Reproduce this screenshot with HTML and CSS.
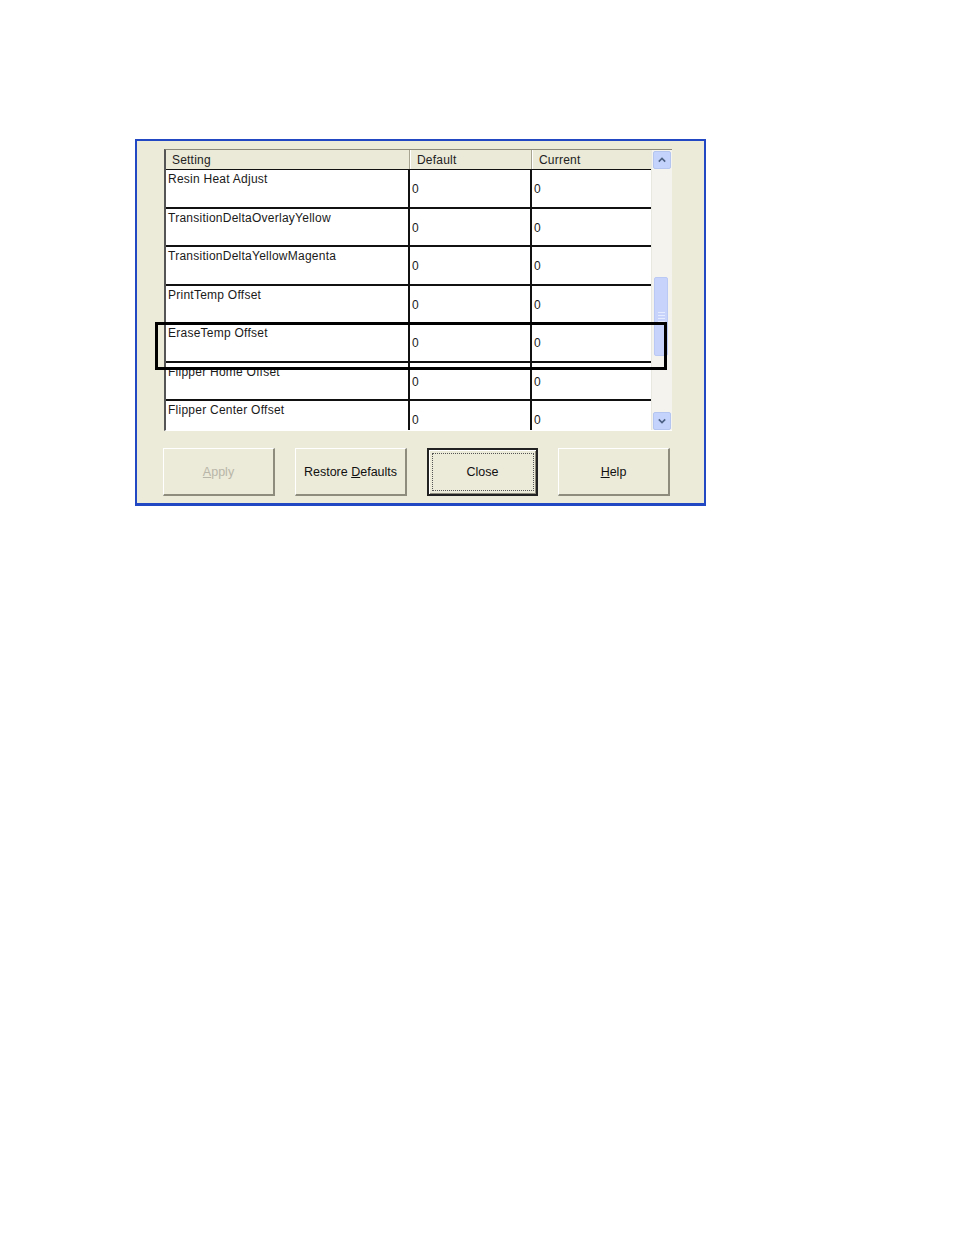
FILE: index.html
```html
<!DOCTYPE html>
<html>
<head>
<meta charset="utf-8">
<link rel="stylesheet" href="styles.css">
</head>
<body>
<div class="page">
  <div class="dialog">
    <div class="grid">
      <div class="table">
        <div class="head">
          <div class="hc c1">Setting</div>
          <div class="hc c2">Default</div>
          <div class="hc c3">Current</div>
        </div>
        <div class="row"><div class="cell c1">Resin Heat Adjust</div><div class="cell c2 v">0</div><div class="cell c3 v">0</div></div>
        <div class="row"><div class="cell c1">TransitionDeltaOverlayYellow</div><div class="cell c2 v">0</div><div class="cell c3 v">0</div></div>
        <div class="row"><div class="cell c1">TransitionDeltaYellowMagenta</div><div class="cell c2 v">0</div><div class="cell c3 v">0</div></div>
        <div class="row"><div class="cell c1">PrintTemp Offset</div><div class="cell c2 v">0</div><div class="cell c3 v">0</div></div>
        <div class="row"><div class="cell c1">EraseTemp Offset</div><div class="cell c2 v">0</div><div class="cell c3 v">0</div></div>
        <div class="row"><div class="cell c1">Flipper Home Offset</div><div class="cell c2 v">0</div><div class="cell c3 v">0</div></div>
        <div class="row last"><div class="cell c1">Flipper Center Offset</div><div class="cell c2 v">0</div><div class="cell c3 v">0</div></div>
      </div>
      <div class="scroll">
        <div class="sbtn"><svg width="20" height="18" viewBox="0 0 20 18"><path d="M6 11 L10 7 L14 11" fill="none" stroke="#4d6185" stroke-width="2"/></svg></div>
        <div class="track"><div class="thumb"><span></span><span></span><span></span><span></span></div></div>
        <div class="sbtn"><svg width="20" height="18" viewBox="0 0 20 18"><path d="M6 7 L10 11 L14 7" fill="none" stroke="#4d6185" stroke-width="2"/></svg></div>
      </div>
    </div>
    <div class="buttons">
      <div class="btn disabled"><span class="lbl"><span class="u">A</span>pply</span></div>
      <div class="btn"><span class="lbl">Restore <span class="u">D</span>efaults</span></div>
      <div class="btn default"><span class="focus"><span class="lbl">Close</span></span></div>
      <div class="btn"><span class="lbl"><span class="u">H</span>elp</span></div>
    </div>
    <div class="highlight"></div>
  </div>
</div>
</body>
</html>
```
FILE: styles.css
```css
html, body {
  margin: 0;
  padding: 0;
  background: #ffffff;
}
.page {
  padding: 139px 0 0 135px;
  height: 1096px;
}
.dialog {
  position: relative;
  box-sizing: border-box;
  width: 571px;
  height: 367px;
  background: #ecead9;
  border: 2px solid #2248c4;
  border-bottom-width: 3px;
  padding: 8px 0 0 27px;
  font-family: "Liberation Sans", Arial, sans-serif;
  font-size: 12px;
  color: #111;
}
.grid {
  display: flex;
  width: 508px;
  height: 282px;
  box-sizing: border-box;
  border-left: 2px solid #555;
  border-top: 1px solid #8a8878;
  border-bottom: 1px solid #ffffff;
}
.table {
  width: 486px;
  display: flex;
  flex-direction: column;
  overflow: hidden;
}
.head {
  display: flex;
  height: 19px;
  flex: none;
  background: #ebe9d8;
  border-bottom: 1px solid #111;
}
.hc {
  box-sizing: border-box;
  padding: 3px 0 0 6px;
  border-right: 1px solid #a7a592;
  border-left: 1px solid #fff;
  color: #222;
  letter-spacing: 0.2px;
}
.c1 { width: 244px; flex: none; }
.c2 { width: 122px; flex: none; }
.c3 { width: 122px; flex: none; }
.hc.c1 { padding-left: 6px; border-left: none; }
.row {
  display: flex;
  height: 38.5px;
  flex: none;
  box-sizing: border-box;
  background: #fff;
  border-bottom: 2px solid #111;
}
.row.last { border-bottom: none; height: 31px; }
.cell {
  box-sizing: border-box;
  padding: 2px 0 0 2px;
  white-space: nowrap;
  overflow: hidden;
  color: #1a1a1a;
  letter-spacing: 0.25px;
}
.cell.c1 { border-right: 2px solid #111; }
.cell.c2 { border-right: 2px solid #111; }
.cell.v { padding-top: 12px; padding-left: 2px; }
.scroll {
  width: 20px;
  flex: none;
  display: flex;
  flex-direction: column;
  background: #f4f3ee;
  border-left: 1px solid #e9e8e0;
}
.sbtn {
  height: 18px;
  flex: none;
  margin: 1px 1px 0 1px;
  background: #c4d3fb;
  border: 1px solid #b4c6ef;
  border-radius: 2px;
  box-sizing: border-box;
  display: flex;
  align-items: center;
  justify-content: center;
}
.sbtn svg { display: block; }
.track {
  flex: 1;
  padding-top: 108px;
  padding-left: 2px;
}
.thumb {
  width: 14px;
  height: 79px;
  box-sizing: border-box;
  background: #c8d3fb;
  border: 1px solid #bac8f4;
  border-radius: 2px;
  display: flex;
  flex-direction: column;
  justify-content: center;
  align-items: center;
  gap: 2px;
}
.thumb span {
  width: 7px;
  height: 1px;
  background: #e6ecff;
}
.buttons {
  display: flex;
  gap: 20px;
  margin-top: 17px;
  margin-left: -1px;
}
.btn {
  box-sizing: border-box;
  width: 112px;
  height: 48px;
  background: #ecead9;
  border: 1px solid #fff;
  border-right: 2px solid #8e8c7c;
  border-bottom: 2px solid #8e8c7c;
  display: flex;
  align-items: center;
  justify-content: center;
  font-size: 12.5px;
  color: #111;
}
.lbl { white-space: pre; }
.btn:nth-child(3) { width: 111px; }
.btn.disabled { color: #b8b6a8; }
.u { text-decoration: underline; }
.btn.default {
  border: 2px solid #222;
  box-shadow: inset 1px 1px 0 #fff, inset -1px -1px 0 #8e8c7c;
}
.focus {
  width: 102px;
  height: 38px;
  box-sizing: border-box;
  border: 1px dotted #555;
  display: flex;
  align-items: center;
  justify-content: center;
}
.highlight {
  position: absolute;
  left: 18px;
  top: 181px;
  width: 512px;
  height: 48px;
  box-sizing: border-box;
  border: 3px solid #000;
}
```
